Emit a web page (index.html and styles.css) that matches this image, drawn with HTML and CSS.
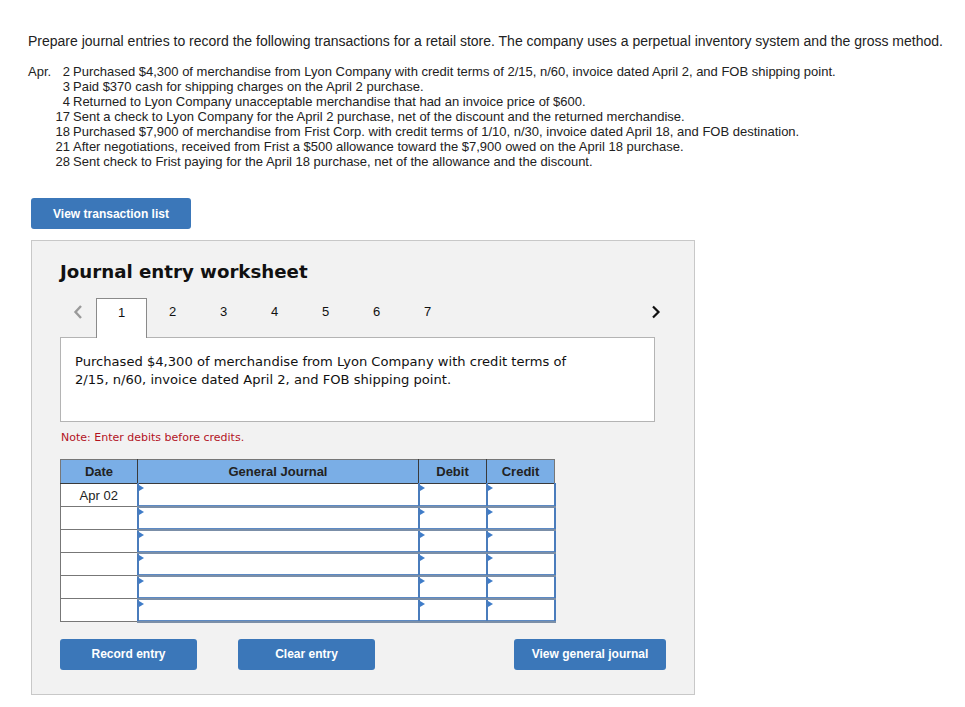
FILE: index.html
```html
<!DOCTYPE html>
<html lang="en">
<head>
    <meta charset="UTF-8">
    <title>Journal entry worksheet</title>
    <link rel="stylesheet" href="styles.css">
</head>
<body>
    <div class="page">
        <p class="intro">Prepare journal entries to record the following transactions for a retail store. The company uses a perpetual inventory system and the gross method.</p>

        <div class="schedule">
            <span class="month">Apr.</span><span class="day">2</span><span class="event">Purchased $4,300 of merchandise from Lyon Company with credit terms of 2/15, n/60, invoice dated April 2, and FOB shipping point.</span>
            <span class="month"></span><span class="day">3</span><span class="event">Paid $370 cash for shipping charges on the April 2 purchase.</span>
            <span class="month"></span><span class="day">4</span><span class="event">Returned to Lyon Company unacceptable merchandise that had an invoice price of $600.</span>
            <span class="month"></span><span class="day">17</span><span class="event">Sent a check to Lyon Company for the April 2 purchase, net of the discount and the returned merchandise.</span>
            <span class="month"></span><span class="day">18</span><span class="event">Purchased $7,900 of merchandise from Frist Corp. with credit terms of 1/10, n/30, invoice dated April 18, and FOB destination.</span>
            <span class="month"></span><span class="day">21</span><span class="event">After negotiations, received from Frist a $500 allowance toward the $7,900 owed on the April 18 purchase.</span>
            <span class="month"></span><span class="day">28</span><span class="event">Sent check to Frist paying for the April 18 purchase, net of the allowance and the discount.</span>
        </div>

        <button class="btn btn-list">View transaction list</button>

        <div class="worksheet">
            <h2 class="ws-title">Journal entry worksheet</h2>

            <div class="tabs">
                <span class="arrow prev">
                    <svg width="12" height="16" viewBox="0 0 12 16"><path d="M9 2 L3.5 8 L9 14" fill="none" stroke="#9a9a9a" stroke-width="2.4"/></svg>
                </span>
                <span class="tab active">1</span>
                <span class="tab">2</span>
                <span class="tab">3</span>
                <span class="tab">4</span>
                <span class="tab">5</span>
                <span class="tab">6</span>
                <span class="tab">7</span>
                <span class="arrow next">
                    <svg width="12" height="16" viewBox="0 0 12 16"><path d="M3 2.5 L8.5 8 L3 13.5" fill="none" stroke="#111" stroke-width="2.2"/></svg>
                </span>
            </div>

            <div class="prompt">Purchased $4,300 of merchandise from Lyon Company with credit terms of 2/15, n/60, invoice dated April 2, and FOB shipping point.</div>

            <p class="note">Note: Enter debits before credits.</p>

            <table class="journal">
                <thead>
                    <tr>
                        <th class="c-date">Date</th>
                        <th class="c-acct">General Journal</th>
                        <th class="c-amt">Debit</th>
                        <th class="c-amt">Credit</th>
                    </tr>
                </thead>
                <tbody>
                    <tr>
                        <td class="date">Apr 02</td>
                        <td class="field"><span class="mark"></span></td>
                        <td class="field"><span class="mark"></span></td>
                        <td class="field"><span class="mark"></span></td>
                    </tr>
                    <tr>
                        <td class="date"></td>
                        <td class="field"><span class="mark"></span></td>
                        <td class="field"><span class="mark"></span></td>
                        <td class="field"><span class="mark"></span></td>
                    </tr>
                    <tr>
                        <td class="date"></td>
                        <td class="field"><span class="mark"></span></td>
                        <td class="field"><span class="mark"></span></td>
                        <td class="field"><span class="mark"></span></td>
                    </tr>
                    <tr>
                        <td class="date"></td>
                        <td class="field"><span class="mark"></span></td>
                        <td class="field"><span class="mark"></span></td>
                        <td class="field"><span class="mark"></span></td>
                    </tr>
                    <tr>
                        <td class="date"></td>
                        <td class="field"><span class="mark"></span></td>
                        <td class="field"><span class="mark"></span></td>
                        <td class="field"><span class="mark"></span></td>
                    </tr>
                    <tr>
                        <td class="date"></td>
                        <td class="field"><span class="mark"></span></td>
                        <td class="field"><span class="mark"></span></td>
                        <td class="field"><span class="mark"></span></td>
                    </tr>
                </tbody>
            </table>

            <div class="actions">
                <button class="btn btn-record">Record entry</button>
                <button class="btn btn-clear">Clear entry</button>
                <button class="btn btn-view">View general journal</button>
            </div>
        </div>
    </div>
</body>
</html>
```

FILE: styles.css
```css
* {
    box-sizing: border-box;
}

body {
    margin: 0;
    background: #fff;
    color: #222;
    font-family: 'Liberation Sans', Arial, sans-serif;
}

.page {
    padding: 33px 20px 20px 28px;
}

.intro {
    margin: 0;
    font-size: 14px;
    line-height: 16px;
    white-space: nowrap;
}

.schedule {
    display: grid;
    grid-template-columns: 26px 16px auto;
    margin-top: 15px;
    font-size: 13px;
    line-height: 15px;
}

.schedule .day {
    text-align: right;
}

.schedule .event {
    padding-left: 3px;
}

.btn {
    border: none;
    border-radius: 3px;
    background: #3b77b9;
    color: #fff;
    font-family: 'Liberation Sans', Arial, sans-serif;
    font-size: 12px;
    font-weight: bold;
    height: 31px;
    padding: 0;
    cursor: pointer;
}

.btn-list {
    display: block;
    width: 160px;
    margin: 29px 0 0 3px;
}

.worksheet {
    width: 664px;
    margin: 11px 0 0 3px;
    padding: 20px 28px 24px;
    background: #f2f2f2;
    border: 1px solid #c8c8c8;
}

.ws-title {
    margin: 0;
    font-family: 'DejaVu Sans', Verdana, sans-serif;
    font-size: 18.2px;
    line-height: 22px;
    font-weight: bold;
    color: #111;
}

.tabs {
    display: flex;
    align-items: flex-start;
    margin-top: 15px;
    height: 40px;
    position: relative;
    z-index: 1;
}

.arrow {
    display: flex;
    align-items: center;
    justify-content: center;
    height: 28px;
}

.arrow.prev {
    width: 36px;
}

.arrow.next {
    margin-left: auto;
    width: 20px;
}

.tab {
    width: 51px;
    height: 40px;
    padding-top: 6px;
    text-align: center;
    font-size: 13px;
    line-height: 16px;
    color: #111;
}

.tab.active {
    background: #fff;
    border: 1px solid #8a8a8a;
    border-bottom: none;
}

.prompt {
    width: 595px;
    height: 85px;
    margin-top: -1px;
    padding: 15px 60px 0 14px;
    background: #fff;
    border: 1px solid #b4b4b4;
    font-family: 'DejaVu Sans', Verdana, sans-serif;
    font-size: 13.1px;
    line-height: 18px;
    color: #111;
}

.note {
    margin: 8px 0 0 1px;
    font-family: 'DejaVu Sans', Verdana, sans-serif;
    font-size: 11px;
    line-height: 15px;
    color: #b3121f;
}

.journal {
    margin-top: 14px;
    border-collapse: collapse;
    font-size: 13px;
}

.journal th {
    height: 24px;
    padding: 0;
    background: #7aaee6;
    border: 1px solid #3a3a3a;
    border-top-color: #777;
    font-weight: bold;
    color: #222;
}

.journal th:first-child {
    border-left-color: #777;
}

.journal th:last-child {
    border-right-color: #777;
}

.c-date {
    width: 77px;
}

.c-acct {
    width: 281px;
}

.c-amt {
    width: 68px;
}

.journal td {
    height: 23px;
    padding: 0;
    border: 1px solid #777;
}

.journal td.date {
    text-align: center;
    vertical-align: middle;
    background: #fff;
}

.journal td.field {
    position: relative;
    background: #fff;
    border-left: 2px solid #4a7cbc;
    border-bottom: 2px solid #7b8fa8;
    border-top: 1px solid #5d8ac4;
    box-shadow: inset 0 -1px 0 #5d8ac4;
}

.journal td.field:last-child {
    border-right: 2px solid #4a7cbc;
}

.mark {
    position: absolute;
    left: 0;
    top: 1px;
    width: 0;
    height: 0;
    border-top: 3px solid transparent;
    border-bottom: 3px solid transparent;
    border-left: 5px solid #3f7cc8;
}

.actions {
    display: flex;
    margin-top: 16px;
}

.btn-record,
.btn-clear {
    width: 137px;
}

.btn-clear {
    margin-left: 41px;
}

.btn-view {
    width: 152px;
    margin-left: auto;
}
```
